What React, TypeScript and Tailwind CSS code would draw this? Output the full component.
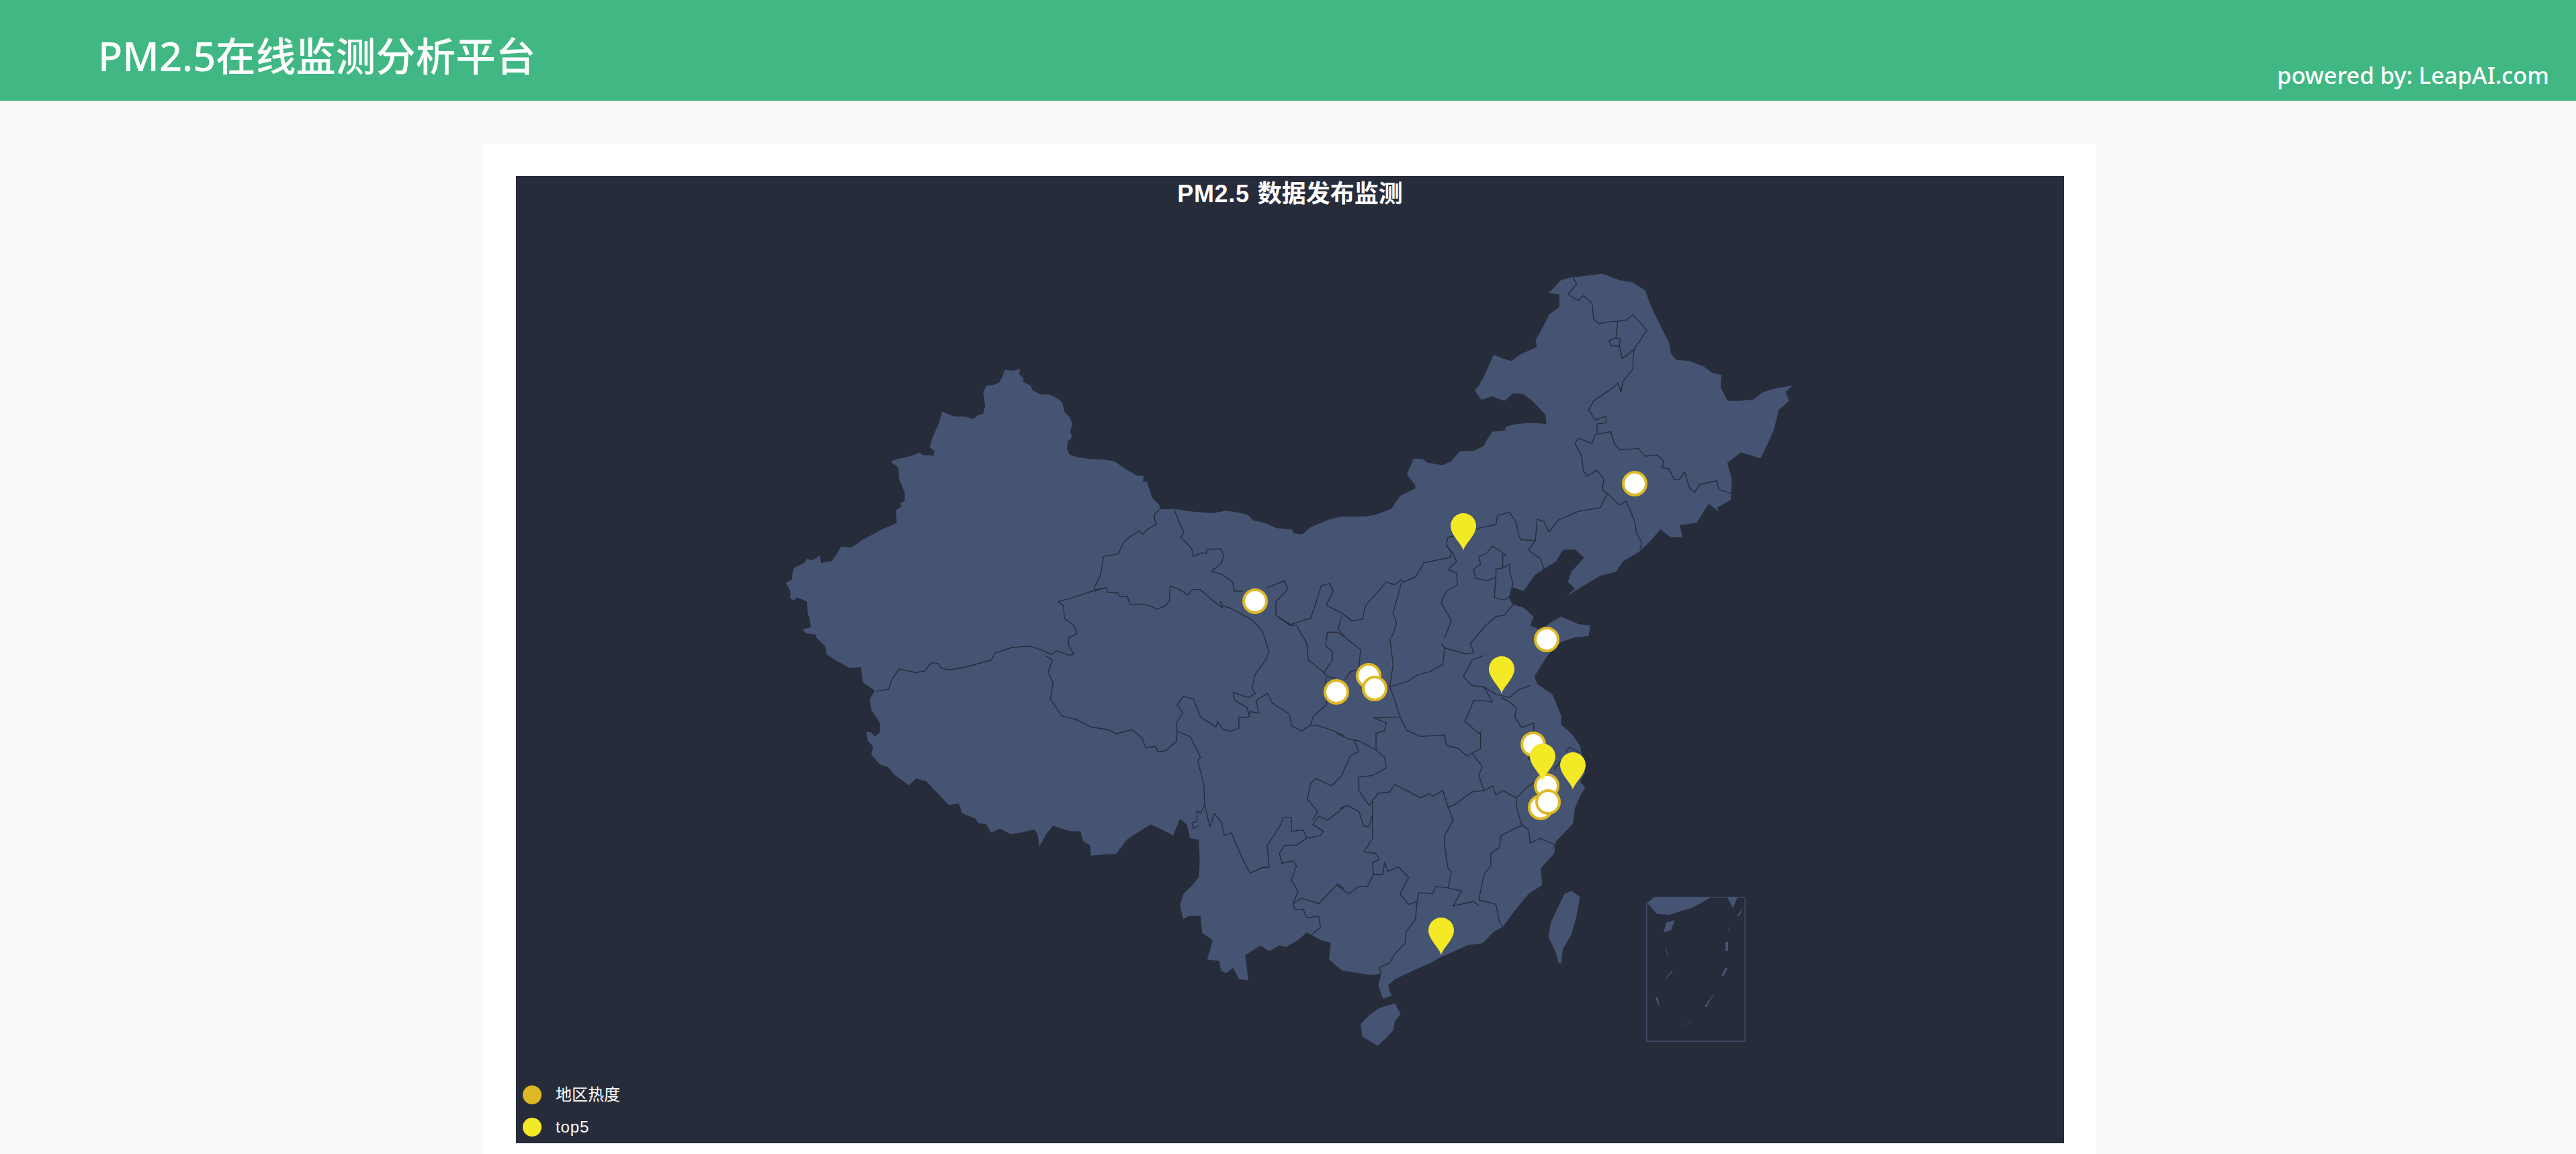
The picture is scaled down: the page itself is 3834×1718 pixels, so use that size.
type Pt = [number, number]

// traced from crops of the map; each helper maps crop coords to page coords
const z3 = (p: Pt[]): Pt[] => p.map(([x, y]) => [1100 + x / 1.96, 350 + y / 2.613])
const z4 = (p: Pt[]): Pt[] => p.map(([x, y]) => [1900 + x / 1.96, 350 + y / 2.613])
const z5 = (p: Pt[]): Pt[] => p.map(([x, y]) => [1200 + x / 1.96, 850 + y / 2.412])
const z6 = (p: Pt[]): Pt[] => p.map(([x, y]) => [1900 + x / 1.96, 900 + y / 2.24])
const z8 = (p: Pt[]): Pt[] => p.map(([x, y]) => [2400 + x / 3, 1300 + y / 3])

const toPath = (p: Pt[], close = false) =>
  'M' + p.map(([x, y]) => `${x.toFixed(1)} ${y.toFixed(1)}`).join('L') + (close ? 'Z' : '')

const outline: Pt[] = [
  ...z3([[1228,1067],[1226,1050],[1205,1022],[1190,960],[1178,958],[1181,937],[1160,935],[1130,912],[1095,880],[1060,873],[1030,872],[990,865],[965,855],[956,830],[960,800],[972,785],[966,765],[972,735],[965,708],[950,690],[942,650],[925,632],[905,620],[880,620],[857,605],[850,585],[828,570],[830,558],[817,540],[820,520],[800,527],[775,525],[770,545],[760,572],[745,582],[722,585],[712,610],[718,665],[712,695],[695,702],[684,716],[660,706],[630,706],[605,695],[593,686],[582,735],[565,785],[556,825],[570,840],[567,858],[535,855],[527,845],[500,860],[465,870],[443,880],[450,890],[465,905],[467,950],[483,1000],[484,1032],[468,1045],[475,1055],[458,1070],[460,1120],[435,1135],[415,1145],[390,1165],[360,1185],[340,1205],[325,1215],[298,1212],[285,1240],[270,1268],[240,1275],[235,1247],[215,1265],[198,1260],[190,1275],[160,1295],[155,1320],[155,1340],[137,1352],[150,1385],[150,1415],[160,1420],[170,1410],[198,1425],[200,1470],[205,1490],[210,1525],[185,1535],[195,1548],[225,1555]]),
  ...z5([[30,240],[55,270],[60,300],[85,320],[125,348],[160,345],[165,400],[200,430],[185,460],[190,500],[215,545],[215,580],[200,595],[190,580],[175,578],[180,610],[195,630],[190,660],[215,695],[240,705],[255,730],[300,770],[320,745],[350,755],[385,800],[415,840],[445,835],[455,870],[495,890],[500,905],[525,910],[540,940],[565,925],[595,945],[625,940],[665,928],[675,945],[680,990],[700,945],[720,915],[770,935],[800,935],[808,970],[828,985],[830,1022],[870,1018],[905,1015],[935,965],[985,925],[1005,910],[1040,930],[1070,950],[1090,890],[1110,910],[1120,960],[1145,965],[1148,1040],[1145,1100],[1125,1130],[1100,1160],[1090,1200],[1100,1250],[1115,1240],[1150,1237],[1155,1300],[1180,1320],[1185,1330],[1170,1395],[1205,1400],[1210,1435],[1225,1445],[1245,1425],[1262,1465],[1290,1470],[1280,1380],[1325,1345],[1350,1365],[1380,1345],[1400,1350],[1435,1325],[1460,1298],[1500,1325],[1530,1335],[1525,1395]]),
  ...z6([[190,1220],[220,1225],[270,1235],[305,1232],[297,1270],[310,1315],[335,1305],[325,1270],[345,1250],[400,1220],[450,1195],[480,1175],[510,1160],[560,1135],[600,1130],[635,1090],[660,1075],[695,1020],[735,965],[775,935],[770,880],[810,830],[815,790],[865,730],[870,680],[885,640],[900,610],[885,590],[900,560],[885,470],[860,430],[830,400],[830,370],[805,300],[760,265],[752,240],[790,170],[830,125],[870,110],[910,105],[915,70],[880,65],[830,40],[800,60],[770,85],[740,70],[750,40],[720,10],[690,0]]),
  ...z4([[690,1440],[678,1410],[690,1370],[720,1385],[755,1320],[790,1290],[815,1270],[835,1225],[870,1222],[897,1255],[860,1310],[850,1350],[870,1375],[845,1405],[900,1360],[945,1325],[990,1310],[1010,1270],[1060,1230],[1090,1190],[1120,1145],[1150,1175],[1185,1175],[1175,1128],[1225,1120],[1260,1045],[1290,1075],[1285,1060],[1325,1030],[1328,950],[1315,885],[1355,845],[1412,868],[1430,820],[1450,760],[1465,680],[1495,645],[1485,610],[1505,585],[1460,595],[1420,610],[1390,640],[1350,645],[1315,645],[1295,590],[1298,545],[1270,535],[1245,510],[1205,490],[1165,485],[1150,460],[1145,420],[1115,340],[1090,270],[1075,215],[1040,185],[1000,175],[950,150],[905,158],[860,165],[830,175],[805,210],[793,225],[825,232],[825,280],[795,310],[770,375],[755,410],[760,435],[710,465],[685,490],[660,480],[633,465],[605,550],[590,585],[578,605],[597,640],[630,628],[665,645],[690,615],[720,618],[750,650],[785,700],[787,735],[740,730],[700,735],[670,745],[665,760],[630,765],[612,800],[605,820],[575,840],[535,840],[510,880],[485,895],[440,885],[425,870],[400,870],[380,930],[405,975],[405,985],[360,1015],[335,1065],[285,1090],[255,1095],[190,1095],[155,1105],[100,1135],[75,1165],[50,1160],[45,1145]]),
  ...z3([[1568,1140],[1530,1118],[1500,1110],[1485,1090],[1460,1080],[1420,1072],[1380,1082],[1320,1075],[1268,1065]]),
]

const islands: Pt[][] = [
  z6([[362,1365],[345,1330],[300,1345],[270,1370],[245,1400],[250,1440],[295,1472],[320,1445],[340,1420],[345,1390]]),
  z6([[860,955],[885,975],[875,1040],[860,1100],[835,1150],[830,1198],[822,1195],[815,1160],[793,1110],[800,1060],[825,1000],[840,965]]),
]

const borders: Pt[][] = [
  // west
  z3([[1268,1065],[1298,1160],[1288,1175],[1320,1218],[1325,1250],[1350,1235],[1362,1240],[1365,1222],[1405,1220],[1414,1245],[1408,1275],[1378,1308],[1410,1320],[1440,1350],[1445,1385],[1470,1385]]),
  z3([[1228,1067],[1212,1085],[1212,1105],[1218,1125],[1190,1145],[1178,1165],[1168,1150],[1150,1165],[1125,1190],[1105,1240],[1063,1250],[1055,1320],[1037,1370],[1037,1385],[1070,1370],[1075,1390],[1105,1392],[1110,1405],[1133,1405],[1140,1437],[1170,1435],[1195,1440],[1220,1455],[1240,1445],[1255,1425],[1258,1365],[1280,1375],[1310,1400],[1320,1380],[1345,1378],[1380,1420],[1410,1450],[1405,1425]]),
  z5([[735,110],[750,125],[753,170],[780,195],[790,225],[765,240],[765,265],[780,300],[765,302],[730,287],[715,300],[690,285],[650,270],[600,275],[550,295],[540,320],[510,330],[465,345],[420,355],[395,350],[385,332],[365,330],[345,360],[320,365],[270,352],[250,390],[240,425],[205,432]]),
  z5([[735,110],[780,95],[860,62]]),
  z5([[700,305],[718,320],[705,365],[720,400],[712,460],[745,520],[790,535],[830,560],[880,570],[905,585],[950,570],[980,600],[990,635],[1020,630],[1025,650],[1050,645],[1080,610],[1082,575],[1120,595],[1150,670],[1142,680],[1160,770],[1162,840],[1150,870],[1140,860],[1140,900],[1125,905],[1130,925],[1145,915]]),
  z5([[1162,840],[1178,920],[1190,870],[1210,900],[1220,950],[1240,940],[1275,1040],[1295,1085],[1330,1065],[1350,1065],[1345,985],[1380,920],[1392,885],[1415,885],[1415,935],[1450,930],[1460,960],[1500,950],[1508,935],[1478,910],[1495,880],[1520,895],[1568,850]]),
  z5([[1460,960],[1430,985],[1395,985],[1380,1015],[1388,1050],[1420,1040],[1430,1060],[1415,1110],[1435,1150],[1420,1195],[1445,1175],[1495,1195],[1530,1150],[1550,1125],[1568,1140]]),
  z5([[1420,1195],[1425,1215],[1450,1215],[1460,1245],[1495,1240],[1500,1280],[1475,1305]]),
  z5([[1082,575],[1080,545],[1098,510],[1082,480],[1100,450],[1130,460],[1150,525],[1195,560],[1200,540],[1215,570],[1240,575],[1262,565],[1262,525],[1290,525],[1295,505],[1320,510],[1312,465],[1345,440],[1360,475],[1410,515],[1415,555],[1445,575],[1470,555],[1490,555],[1530,570],[1568,590]]),
  z5([[1205,110],[1215,125],[1240,135],[1300,175],[1330,215],[1350,290],[1340,320],[1310,370],[1300,420],[1310,440],[1290,455],[1245,435],[1250,465],[1285,490],[1295,525]]),
  z5([[1345,60],[1395,35],[1405,65],[1370,110],[1370,160],[1410,195],[1430,195],[1460,260],[1465,320],[1490,345],[1510,365],[1535,320],[1535,290],[1515,270],[1520,220],[1550,220],[1568,235]]),
  z5([[1510,365],[1520,380],[1545,385]]),
  z5([[1515,385],[1518,480],[1480,520],[1470,555]]),
  // north and northeast
  z4([[0,1480],[40,1515],[100,1490],[115,1430],[130,1365],[155,1355],[165,1385],[145,1440],[190,1470],[220,1500],[250,1495],[260,1440],[300,1380],[320,1350],[345,1360],[365,1340],[370,1350],[405,1330],[430,1275],[465,1265],[505,1255],[510,1235],[495,1205],[500,1175],[540,1165],[590,1140],[610,1135],[640,1125],[645,1090],[680,1078],[700,1120],[705,1160],[712,1185],[755,1188],[760,1105],[780,1115],[795,1155],[820,1110],[880,1075],[945,1060],[965,1005],[1000,1050],[1020,1035],[1045,1115],[1050,1160],[1065,1195],[1060,1225]]),
  z4([[965,1005],[950,990],[955,950],[935,915],[905,938],[895,915],[890,860],[870,810],[880,790],[920,810],[930,775],[975,765],[985,810],[1000,835],[1055,830],[1075,860],[1110,855],[1130,880],[1125,905],[1145,910],[1160,950],[1175,950],[1190,920],[1205,985],[1220,1000],[1235,970],[1285,955],[1290,990],[1328,1005]]),
  z4([[935,770],[935,735],[962,730],[960,705],[930,720],[910,680],[925,645],[985,590],[995,575],[1005,610],[1010,570],[1040,520],[1040,470],[1045,440],[1080,370],[1040,310],[1020,330],[995,335],[965,338],[940,345],[925,325],[920,265],[895,235],[880,255],[850,230],[875,190],[865,165]]),
  z4([[995,335],[990,400],[970,410],[975,430],[1000,432],[1008,480],[1030,460],[1045,440]]),
  z4([[990,400],[1003,403],[1000,432]]),
  z4([[630,1210],[610,1240],[590,1250],[595,1280],[575,1300],[580,1335],[615,1345],[640,1330],[640,1300],[660,1295],[660,1245],[670,1245],[630,1210]]),
  z4([[660,1295],[680,1280],[680,1310],[690,1355],[680,1405],[665,1420],[635,1410],[640,1330]]),
  z4([[755,1188],[735,1225],[770,1260],[780,1300]]),
  z4([[495,1205],[515,1240],[525,1270],[500,1300],[525,1315],[528,1360],[495,1385],[480,1430],[510,1500],[490,1568]]),
  z4([[365,1350],[340,1470],[350,1510],[335,1568]]),
  // east
  z6([[480,130],[490,145],[485,200],[445,225],[410,235],[385,255],[330,275],[345,320],[360,375],[285,378],[320,395],[315,420],[290,430],[290,485]]),
  z6([[330,110],[340,200],[330,275]]),
  z6([[690,0],[665,35],[640,40],[610,70],[565,130],[575,160],[555,165],[490,145]]),
  z6([[605,170],[570,185],[545,240],[570,270],[605,275],[630,325],[600,320],[575,320],[550,390],[590,430],[595,425],[595,480],[570,495],[555,505],[530,480],[495,470],[490,435],[420,440],[380,420],[360,375]]),
  z6([[605,275],[640,300],[680,310],[705,285],[740,270]]),
  z6([[655,310],[680,325],[700,345],[695,375],[715,410],[750,395],[750,420],[730,440],[735,515],[750,525],[755,550]]),
  z6([[570,495],[600,540],[590,570],[605,620],[630,605],[640,635],[660,620],[700,645],[730,610],[755,590]]),
  z6([[605,620],[570,625],[515,670],[500,675],[485,620],[455,640],[445,630],[420,645],[345,600],[330,625],[295,630],[280,655],[270,670],[240,620],[240,575],[280,570],[320,545],[315,510],[290,485],[240,455],[225,450],[240,490],[215,505],[190,570],[160,605],[115,580],[100,595],[90,650],[120,690],[105,720]]),
  z6([[500,675],[515,720],[490,770],[490,800],[500,880],[510,890],[500,945]]),
  z6([[280,655],[280,780],[255,825],[290,830],[300,850],[280,860],[283,900],[310,900],[315,860],[325,890],[355,875],[385,910],[360,965],[385,1000],[410,990],[415,960],[455,965],[465,940],[500,945],[540,955],[515,1005],[575,990],[590,1005]]),
  z6([[590,985],[640,1000],[650,1060],[660,1075]]),
  z6([[590,985],[605,900],[625,870],[625,830],[650,810],[655,770],[690,750],[720,735]]),
  z6([[700,645],[700,675],[715,735],[735,750],[740,795],[770,780],[810,800],[815,830]]),
  z6([[410,990],[405,1050],[378,1090],[375,1130],[345,1165],[330,1195],[300,1210],[305,1232]]),
  z6([[283,900],[265,940],[240,940],[210,965],[175,935]]),
  z6([[185,680],[205,670],[240,690],[255,740],[270,740],[280,700]]),
  z6([[190,40],[180,80],[200,110],[245,150],[240,215],[215,225],[200,250]]),
  z6([[175,430],[215,450],[240,455]]),
  z6([[845,490],[855,475],[885,495]]),
  z6([[810,550],[830,520]]),
]

// nine-dash box
const insetFills: Pt[][] = [
  z8([[155,132],[185,107],[440,107],[360,152],[252,186],[198,182]]),
  z8([[512,107],[558,107],[538,155]]),
  z8([[240,220],[277,210],[262,255],[228,264]]),
  z8([[583,155],[568,190],[556,190]]),
  z8([[534,228],[518,260],[514,260]]),
  z8([[505,306],[516,306],[516,347],[505,347]]),
  z8([[235,331],[238,331],[250,372],[247,372]]),
  z8([[504,423],[514,423],[497,459],[486,459]]),
  z8([[262,438],[269,438],[238,474],[235,474]]),
  z8([[450,540],[452,541],[420,597],[410,597]]),
  z8([[192,556],[203,556],[209,591],[205,591]]),
  z8([[350,662],[352,663],[322,680],[318,680]]),
]
const insetBox = z8([[152,132],[152,751],[592,751],[592,112],[585,107],[185,107]])

const rings: Pt[] = [
  [1868, 895], [2433, 720], [2302, 952], [1989, 1030], [2037, 1006], [2046, 1025],
  [2282, 1108], [2302, 1170], [2293, 1202], [2304, 1194],
]
// tip of each marker
const pins: Pt[] = [[2178, 820], [2235, 1033], [2296, 1163], [2341, 1176], [2145, 1422]]

function ChinaMap() {
  return (
    <svg viewBox="768 262 2304 1440" className="block w-full h-full">
      <path d={toPath(outline, true)} fill="#465473" />
      {islands.map((p, i) => (
        <path key={i} d={toPath(p, true)} fill="#465473" />
      ))}
      {borders.map((p, i) => (
        <path key={i} d={toPath(p)} fill="none" stroke="#272c3b" strokeWidth="1.4" strokeLinejoin="round" />
      ))}
      <path d={toPath(insetBox)} fill="none" stroke="#3e4a66" strokeWidth="1.6" />
      {insetFills.map((p, i) => (
        <path key={i} d={toPath(p, true)} fill="#465473" />
      ))}
      {rings.map(([x, y], i) => (
        <circle key={i} cx={x} cy={y} r="17" fill="#ffffff" stroke="#ddb926" strokeWidth="4" />
      ))}
      {pins.map(([x, y], i) => (
        <path
          key={i}
          transform={`translate(${x} ${y})`}
          d="M0 0C-1 -9 -19 -23 -19 -37A19 19 0 1 1 19 -37C19 -23 1 -9 0 0Z"
          fill="#f4e925"
        />
      ))}
    </svg>
  )
}

const cjk = "font-['Noto_Sans','Noto_Sans_CJK_SC',sans-serif]"
const chartFont = "font-['Liberation_Sans','Noto_Sans_CJK_SC',sans-serif]"

export default function App() {
  return (
    <div className="h-[1718px] overflow-hidden bg-[#fafafa]">
      <header className={`flex justify-between h-[150px] bg-[#41b883] text-white pl-[146px] pr-[40px] ${cjk}`}>
        <h1 className="text-[59.5px] leading-[58px] pt-[54px] font-medium">PM2.5在线监测分析平台</h1>
        <span className="text-[34.5px] leading-[36px] self-end pb-[20px] font-medium">powered by: LeapAI.com</span>
      </header>
      <main className="w-[2400px] mt-[64px] ml-[720px] bg-white p-12">
        <div className={`relative h-[1440px] bg-[#272c3b] text-white ${chartFont}`}>
          <ChinaMap />
          <div className="absolute top-0 left-0 right-0 text-center text-[36px] leading-[54px] font-bold [word-spacing:2px]">
            <span className="tracking-[0.7px]">PM2.5</span> 数据发布监测
          </div>
          <ul className="absolute left-[10px] bottom-[10px] flex flex-col gap-[20px] text-[24px] leading-[28px]">
            <li className="flex items-center gap-[21px]">
              <span className="w-[28px] h-[28px] rounded-full bg-[#ddb926]" />
              地区热度
            </li>
            <li className="flex items-center gap-[21px] tracking-[0.9px]">
              <span className="w-[28px] h-[28px] rounded-full bg-[#f4e925]" />
              top5
            </li>
          </ul>
        </div>
      </main>
    </div>
  )
}
